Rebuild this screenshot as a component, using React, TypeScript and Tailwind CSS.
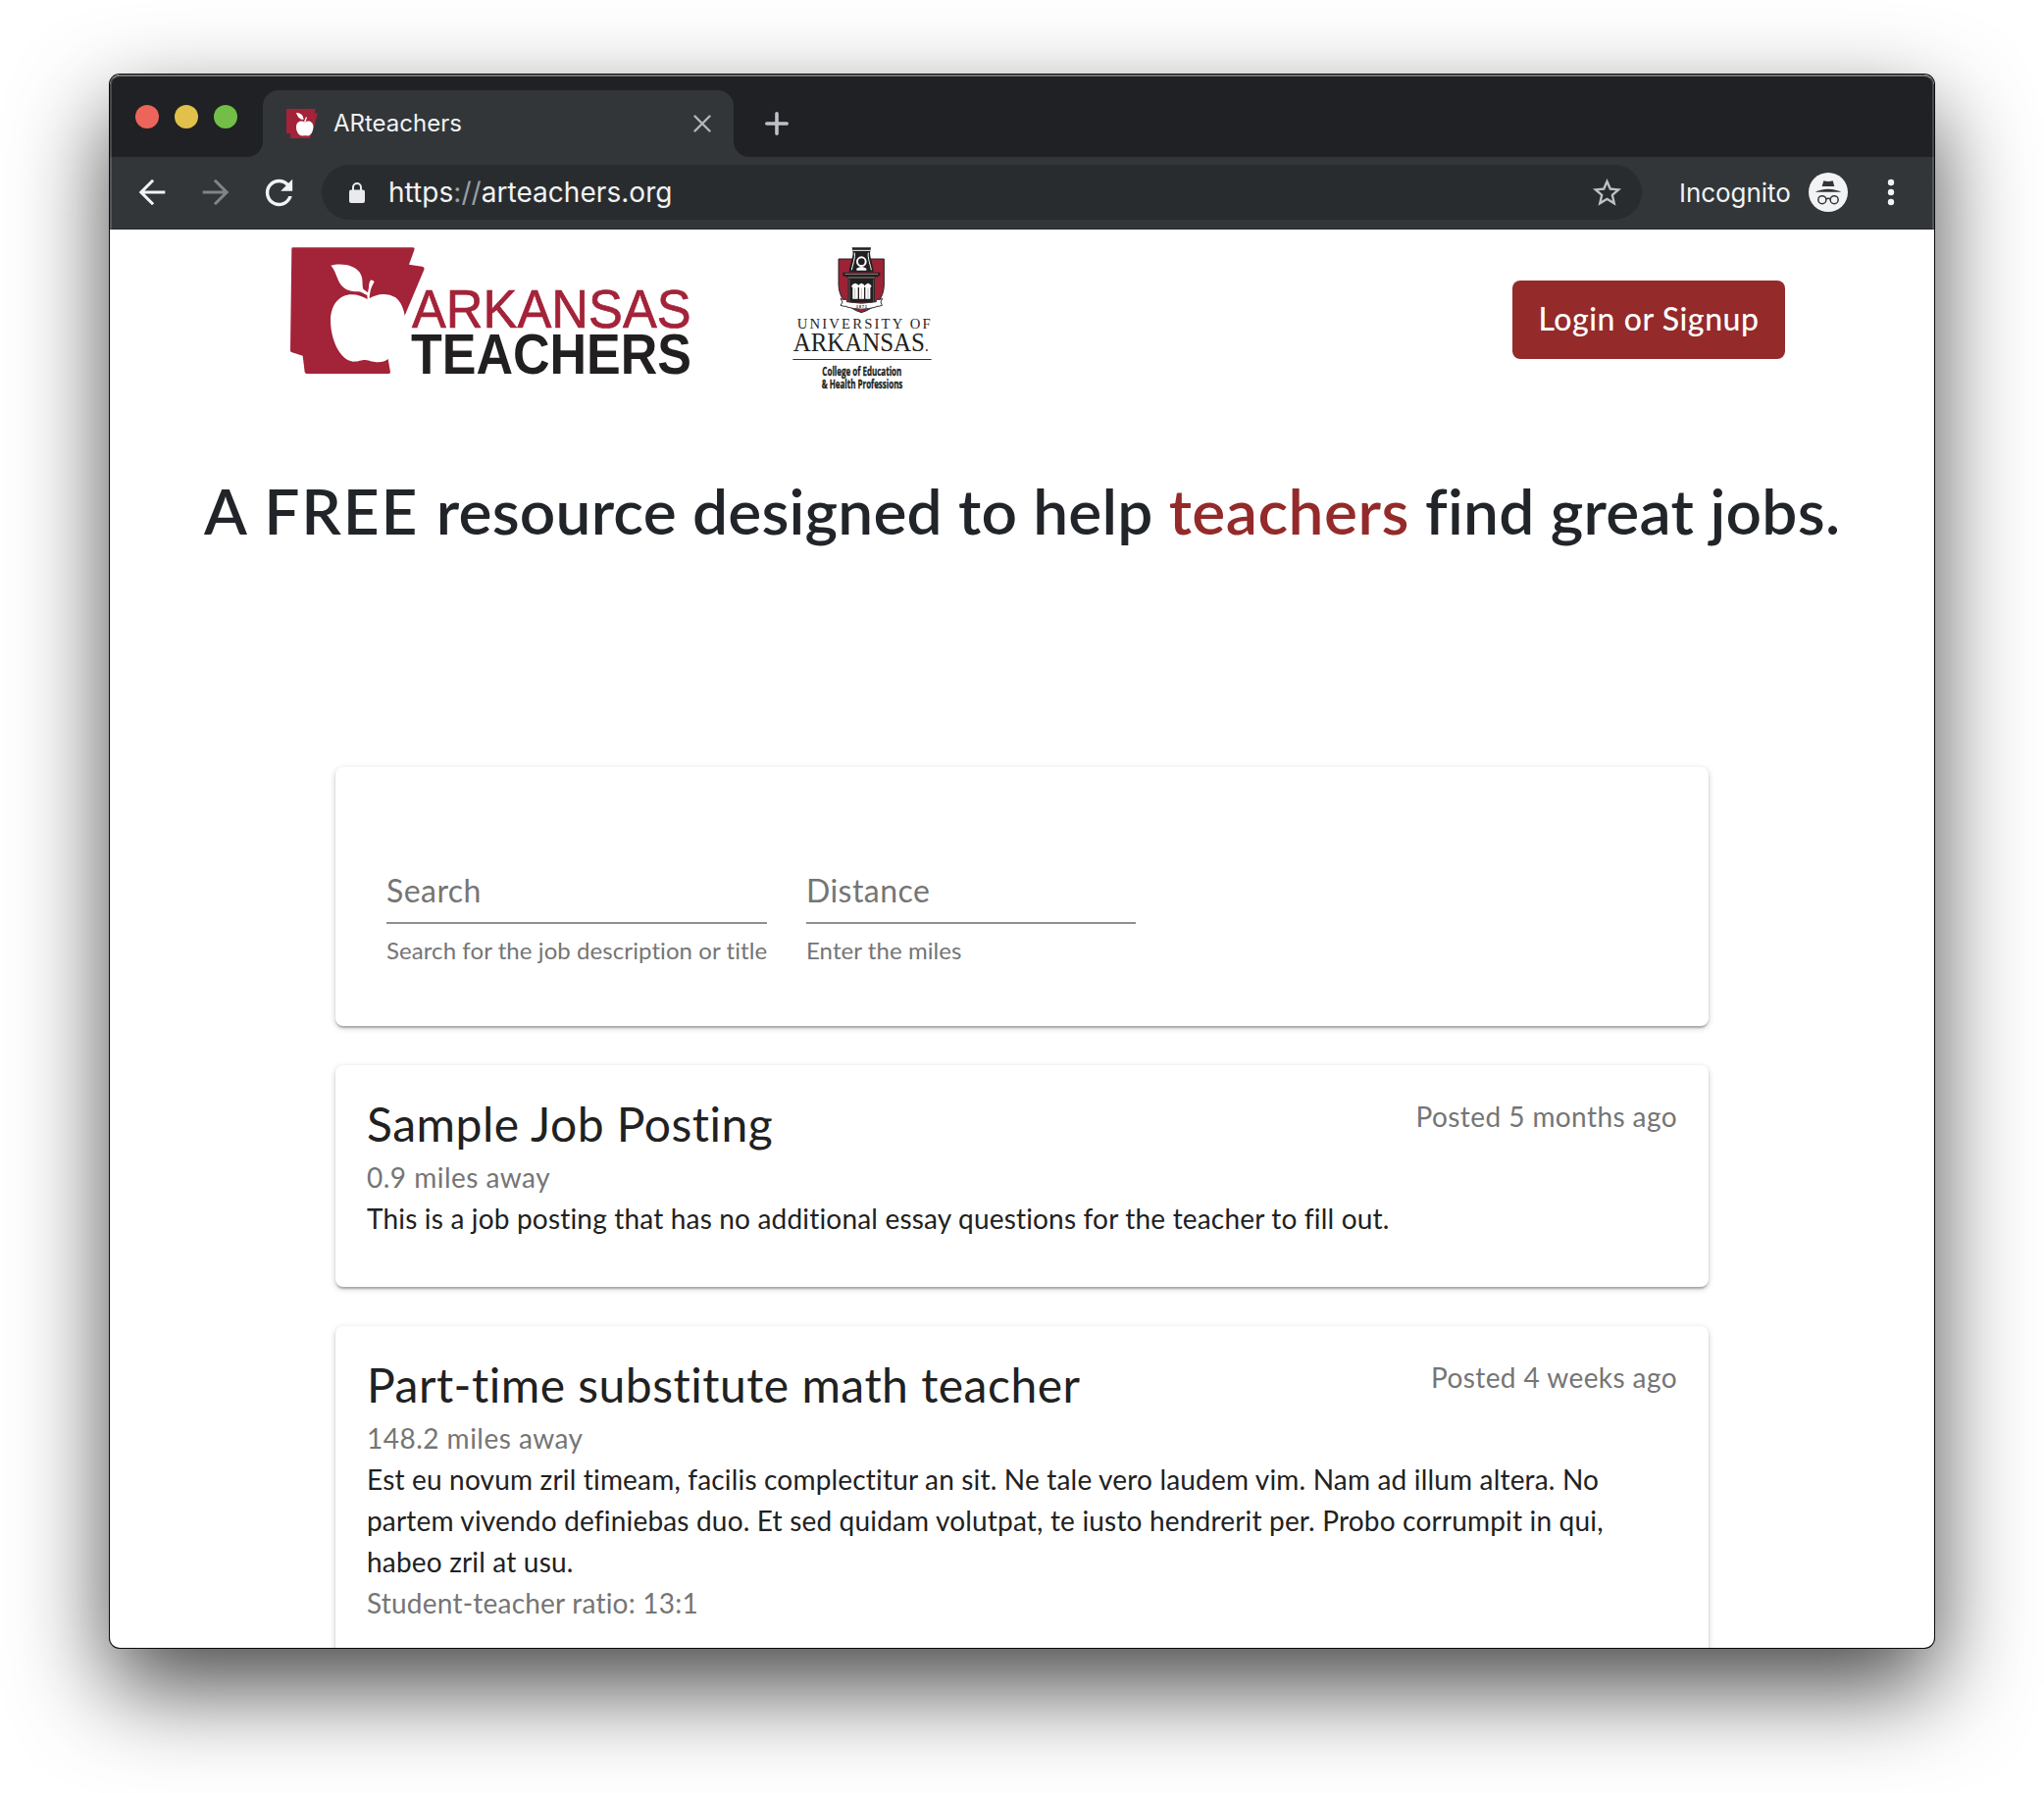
const materialStar =
  "M22 9.24l-7.19-.62L12 2 9.19 8.63 2 9.24l5.46 4.73L5.82 21 12 17.27 18.18 21l-1.63-7.03L22 9.24zM12 15.4l-3.76 2.27 1-4.28-3.32-2.88 4.38-.38L12 6.1l1.71 4.04 4.38.38-3.32 2.88 1 4.28L12 15.4z";
const arrowBack = "M20 11.100H7.500l5.800-5.800L12 4l-8 8 8 8 1.300-1.300L7.500 12.900H20v-1.800z";
const refresh =
  "M17.65 6.35C16.2 4.9 14.21 4 12 4c-4.42 0-7.99 3.58-7.99 8s3.57 8 7.99 8c3.73 0 6.84-2.55 7.73-6h-2.08c-.82 2.33-3.04 4-5.65 4-3.31 0-6-2.69-6-6s2.69-6 6-6c1.66 0 3.14.69 4.22 1.78L13 11h7V4l-2.35 2.35z";

function StateApple() {
  return (
    <>
      <path
        fill="#a32339"
        d="M56 37H423Q430 38 427 45L411 89L451 95Q460 97 457 105L398 245L347 378L354 418Q354 423 349 423H98Q93 423 92 418L86 368L51 357Q48 356 48 352L52 41Q52 37 56 37Z"
      />
      <path
        fill="#fff"
        d="M285 196C310 177 345 174 370 190C386 204 394 222 398 245L430 300L347 378C332 391 308 389 290 383C270 377 262 386 240 386C200 382 172 320 171 262C171 210 200 181 235 181C255 181 270 187 285 196Z"
      />
      <path
        fill="#fff"
        d="M172 92C200 84 250 88 264 120C271 135 267 152 271 164L285 175L288 160C288 150 290 142 293 137Q299 134 305 142C298 155 291 166 290 196H284L283 183C275 180 265 173 258 172C238 173 213 167 202 150C190 132 186 106 172 92Z"
      />
    </>
  );
}

function ArkansasTeachersLogo() {
  return (
    <svg viewBox="0 0 1320 480" className="h-[160px] w-[440px] shrink-0">
      <StateApple />
      <text x="420" y="281" fontSize="165" textLength="854" lengthAdjust="spacingAndGlyphs" fill="#a32339" stroke="#a32339" strokeWidth="2" className="font-['Liberation_Sans',sans-serif]">
        ARKANSAS
      </text>
      <text x="417" y="424" fontSize="170" textLength="858" lengthAdjust="spacingAndGlyphs" fill="#221f20" className="font-['Liberation_Sans',sans-serif] font-bold">
        TEACHERS
      </text>
    </svg>
  );
}

function UniversityLogo() {
  return (
    <svg viewBox="0 0 540 510" className="h-[170px] w-[180px] shrink-0">
      <path d="M195 72H334V150C334 190 310 222 265 236C220 222 195 190 195 150Z" fill="#9b2335" stroke="#2b2226" strokeWidth="3" />
      <path d="M236 37H294L292 48C288 62 300 84 302 112H227C230 84 242 62 238 48Z" fill="#221f20" />
      <path d="M238 46H292M244 53C247 68 237 92 235 106M286 53C283 68 293 92 295 106" stroke="#fff" strokeWidth="3" fill="none" />
      <circle cx="265" cy="80" r="13" fill="#221f20" stroke="#fff" strokeWidth="6" />
      <path d="M250 101Q265 91 280 101V107H250Z" fill="#fff" />
      <path d="M208 113H322V123L306 129V205H224V129L208 123Z" fill="#221f20" />
      <path d="M214 118H316M224 129H306" stroke="#bbb" strokeWidth="2" />
      <path d="M228 134V204M302 134V204" stroke="#777" strokeWidth="2" />
      <path d="M238 194V160L234 156L238 150L246 146L254 150L258 156L254 160V194ZM258 194V160L255 156L258 150L265 146L272 150L276 156L273 160V194ZM277 194V160L274 156L278 150L285 146L292 150L296 156L292 160V194Z" fill="#fff" />
      <path d="M245 162V192M265 162V192M285 162V192" stroke="#777" strokeWidth="1.5" />
      <path d="M201 193Q208 198 220 196V203Q265 212 310 203V196Q322 198 329 193L324 204L328 214Q318 218 310 217V219Q265 232 220 219V217Q210 218 201 214L207 204Z" fill="#fff" stroke="#3a3335" strokeWidth="3" />
      <text x="265" y="221" fontSize="14" textAnchor="middle" textLength="34" fill="#222" className="font-['Liberation_Serif',serif] font-bold">1871</text>
      <text x="68" y="286" fontSize="44" textLength="408" fill="#2a2627" className="font-['Liberation_Serif',serif]">UNIVERSITY OF</text>
      <text x="56" y="353" fontSize="85" textLength="414" lengthAdjust="spacingAndGlyphs" fill="#221f20" className="font-['Liberation_Serif',serif]">
        ARKANSAS<tspan fontSize="50">.</tspan>
      </text>
      <path d="M55 379.500H479" stroke="#333" strokeWidth="3" />
      <text x="145" y="430" fontSize="35" textLength="243" lengthAdjust="spacingAndGlyphs" fill="#221f20" stroke="#221f20" className="font-['Open_Sans',sans-serif] font-bold">College of Education</text>
      <text x="143" y="469" fontSize="35" textLength="248" lengthAdjust="spacingAndGlyphs" fill="#221f20" stroke="#221f20" className="font-['Open_Sans',sans-serif] font-bold">&amp; Health Professions</text>
    </svg>
  );
}

function TabStrip() {
  return (
    <div className="flex h-[84px] items-start rounded-t-[10px] border-x-2 border-t-2 border-x-[#48494c] border-t-[#707172] bg-[#202124]">
      <div className="mt-[29px] ml-6 flex gap-4">
        <span className="size-6 rounded-full bg-[#ed655a]" />
        <span className="size-6 rounded-full bg-[#e1c04c]" />
        <span className="size-6 rounded-full bg-[#72be47]" />
      </div>
      <div className="relative mt-[14px] ml-[26px] flex h-[68px] w-[480px] items-center rounded-t-2xl bg-[#323639] pl-6">
        <span className="absolute bottom-0 -left-4 size-4 bg-[radial-gradient(circle_at_0_0,transparent_15.5px,#323639_16.5px)]" />
        <span className="absolute -right-4 bottom-0 size-4 bg-[radial-gradient(circle_at_100%_0,transparent_15.5px,#323639_16.5px)]" />
        <svg viewBox="0 0 64 60" className="h-[30px] w-8">
          <path d="M0 0H60L57 9H64L55 40L48 60H8V50H0Z" fill="#a32339" />
          <path d="M38 27C44 22 55 26 55 36C55 46 49 55 44 55C40 54 37 54 33 55C25 55 19 45 20 35C21 25 31 23 38 27Z" fill="#fff" />
          <path d="M20 8C29 8 35 13 35 22C27 22 23 16 20 8ZM36 26L40 16L42 18L39 26Z" fill="#fff" />
        </svg>
        <span className="ml-4 text-2xl text-[#f1f3f4]">ARteachers</span>
        <svg viewBox="0 0 18 18" className="mr-[23px] ml-auto size-[18px]" stroke="#b5b7ba" strokeWidth="2.400" strokeLinecap="round">
          <path d="M1.500 1.500L16.500 16.500M16.500 1.500L1.500 16.500" />
        </svg>
      </div>
      <svg viewBox="0 0 24 24" className="mt-9 ml-8 size-6" stroke="#bdc1c6" strokeWidth="3.600" strokeLinecap="round">
        <path d="M12 1.800V22.200M1.800 12H22.200" />
      </svg>
    </div>
  );
}

function Toolbar() {
  return (
    <div className="flex h-[74px] items-center border-x-2 border-b border-x-[#55585b] border-b-[#2a2526] bg-[#323639] pb-px pl-[21px]">
      <svg viewBox="0 0 24 24" className="size-10" fill="#f1f3f4"><path d={arrowBack} /></svg>
      <svg viewBox="0 0 24 24" className="ml-[25px] size-10 -scale-x-100" fill="#818487"><path d={arrowBack} /></svg>
      <svg viewBox="0 0 24 24" className="ml-6 size-[41px]" fill="#f1f3f4"><path d={refresh} /></svg>
      <div className="ml-[23px] flex h-14 w-[1346px] items-center rounded-full bg-[#292c2f] pr-[18px] pl-7">
        <svg viewBox="0 0 16 21" className="h-[21px] w-4">
          <rect y="7.500" width="16" height="13.500" rx="2" fill="#e8eaed" />
          <path d="M4 8V5a4 4 0 0 1 8 0V8" fill="none" stroke="#e8eaed" strokeWidth="2" />
        </svg>
        <span className="ml-6 text-[28px] tracking-[0.04px] text-[#f1f3f4]">
          <span>https</span>
          <span className="text-[#9aa0a6]">://</span>
          <span>arteachers.org</span>
        </span>
        <svg viewBox="0 0 24 24" className="ml-auto size-[35px]" fill="#bdc1c6"><path d={materialStar} /></svg>
      </div>
      <span className="ml-[38px] w-[132px] text-[26px] tracking-[-0.05px] text-[#f1f3f4]">Incognito</span>
      <svg viewBox="852 333 120 120" className="size-10">
        <circle cx="912" cy="393" r="60" fill="#f1f3f4" />
        <path fill="#323639" d="M872 392Q888 384 912 383Q936 384 952 392ZM893 375L898 358Q905 360 912 360Q919 360 926 358L931 375Z" />
        <g fill="none" stroke="#323639" strokeWidth="4.500">
          <circle cx="893.500" cy="416" r="12" />
          <circle cx="930.500" cy="416" r="12" />
          <path d="M905 414Q912 410 919 414" />
        </g>
      </svg>
      <svg viewBox="0 0 8 28" className="ml-10 h-7 w-2" fill="#f1f3f4">
        <circle cx="4" cy="4" r="3.200" /><circle cx="4" cy="14" r="3.200" /><circle cx="4" cy="24" r="3.200" />
      </svg>
    </div>
  );
}

const cardClass =
  "rounded-lg bg-white shadow-[0_2px_6px_rgba(0,0,0,0.2),0_2px_2px_rgba(0,0,0,0.14),0_4px_2px_-2px_rgba(0,0,0,0.12)]";

function Hero() {
  return (
    <h1 className="h-[76px] pt-px pl-[96px] text-[64px] leading-[76px] font-semibold tracking-[0.19px] whitespace-nowrap text-[#212529]">
      <span className="tracking-[1.8px]">A FREE </span>
      resource designed to help <span className="tracking-[0.48px] text-[#942a2a]">teachers</span>
      <span className="tracking-[0.26px]"> find great jobs.</span>
    </h1>
  );
}

function Field({ label, hint, className }: { label: string; hint: string; className: string }) {
  return (
    <div className={className}>
      <div className="h-[54px] border-b-2 border-[#8f8f8f] text-[32px] leading-10 tracking-[0.45px]">{label}</div>
      <div className="mt-[13px] text-2xl leading-7 tracking-[0.08px] whitespace-nowrap">{hint}</div>
    </div>
  );
}

type Job = { title: string; posted: string; distance: string; lines: string[]; ratio?: string };

const jobs: Job[] = [
  {
    title: "Sample Job Posting",
    posted: "Posted 5 months ago",
    distance: "0.9 miles away",
    lines: ["This is a job posting that has no additional essay questions for the teacher to fill out."],
  },
  {
    title: "Part-time substitute math teacher",
    posted: "Posted 4 weeks ago",
    distance: "148.2 miles away",
    lines: [
      "Est eu novum zril timeam, facilis complectitur an sit. Ne tale vero laudem vim. Nam ad illum altera. No",
      "partem vivendo definiebas duo. Et sed quidam volutpat, te iusto hendrerit per. Probo corrumpit in qui,",
      "habeo zril at usu.",
    ],
    ratio: "Student-teacher ratio: 13:1",
  },
];

function JobCard({ job }: { job: Job }) {
  return (
    <article className={`${cardClass} mt-10 px-8 pt-8 pb-[49px] text-[28px] leading-[42px] text-[#212121]`}>
      <div className="mb-[5px] flex items-start justify-between">
        <h2 className="text-[48px] leading-[56px] tracking-[0.5px]">{job.title}</h2>
        <span className="-mt-px tracking-[0.42px] text-[#757575]">{job.posted}</span>
      </div>
      <div className="tracking-[0.48px] text-[#757575]">{job.distance}</div>
      {job.lines.map((line) => (
        <p key={line} className="tracking-[0.18px] whitespace-nowrap">{line}</p>
      ))}
      {job.ratio && <div className="tracking-[0.22px] text-[#757575]">{job.ratio}</div>}
    </article>
  );
}

export default function App() {
  return (
    <div className="h-[1828px] w-[2084px] overflow-hidden bg-white px-[112px] pt-[76px]">
      <div className="h-[1604px] w-[1860px] overflow-hidden rounded-[10px] bg-white shadow-[0_0_0_1px_#0a0a0a,0_40px_96px_rgba(0,0,0,0.72)]">
        <div className="font-['Inter',sans-serif]">
          <TabStrip />
          <Toolbar />
        </div>
        <div className="font-['Lato',sans-serif]">
          <header className="flex h-[248px] items-start pt-1.5 pl-[168px]">
            <ArkansasTeachersLogo />
            <div className="ml-[70px] flex">
              <UniversityLogo />
            </div>
            <button className="mt-[46px] ml-[572px] h-20 w-[278px] rounded-lg bg-[#942a2a] pb-0.5 text-[32px] font-medium tracking-[0.55px] text-white">
              Login or Signup
            </button>
          </header>
          <Hero />
          <main className="mx-auto mt-[224px] w-[1400px]">
            <section className={`${cardClass} flex h-[264px] gap-10 pt-[106px] pl-[52px] text-[#757575]`}>
              <Field label="Search" hint="Search for the job description or title" className="w-[388px]" />
              <Field label="Distance" hint="Enter the miles" className="w-[336px]" />
            </section>
            {jobs.map((job) => (
              <JobCard key={job.title} job={job} />
            ))}
          </main>
        </div>
      </div>
    </div>
  );
}
